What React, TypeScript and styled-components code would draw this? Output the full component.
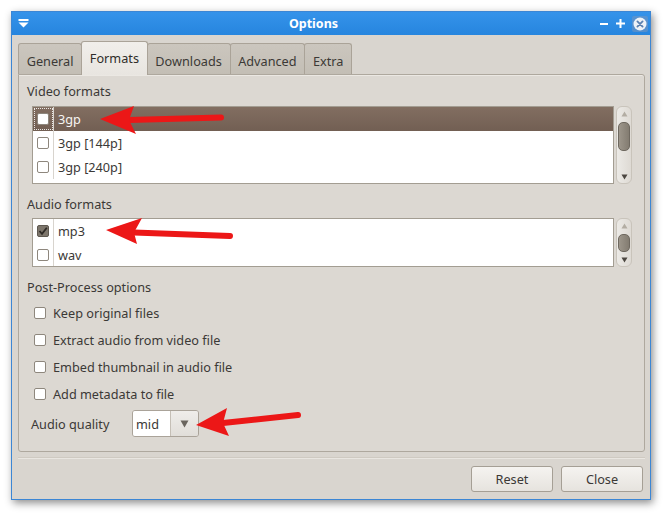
import React from "react";
import styled, { createGlobalStyle } from "styled-components";

const Global = createGlobalStyle`
  html, body { margin: 0; padding: 0; background: #ffffff; }
  body {
    font-family: "Noto Sans", "Open Sans", "DejaVu Sans", sans-serif;
    font-size: 12.7px;
    color: #3b3936;
  }
  #root { width: 668px; height: 516px; }
`;

const Stage = styled.div`
  position: relative;
  width: 668px;
  height: 516px;
  box-sizing: border-box;
  padding: 11px 0 0 11px;
  overflow: hidden;
`;

const Window = styled.div`
  width: 640px;
  height: 489px;
  box-sizing: border-box;
  border: 1px solid #3c86d4;
  background: #d9d5cf;
  box-shadow: 2px 3px 8px rgba(0, 0, 0, 0.45);
  display: flex;
  flex-direction: column;
`;

const TitleBar = styled.div`
  flex: none;
  height: 23px;
  display: flex;
  align-items: center;
  background: linear-gradient(#3593ea, #2685de);
  color: #ffffff;
`;

const TitleMenu = styled.div`
  width: 24px;
  flex: none;
  display: flex;
  align-items: center;
  padding-left: 6px;
  box-sizing: border-box;
`;

const TitleText = styled.div`
  flex: 1;
  text-align: center;
  font-weight: bold;
  font-size: 12.5px;
  line-height: 23px;
`;

const TitleControls = styled.div`
  width: 59px;
  flex: none;
  display: flex;
  align-items: center;
  gap: 8px;
  padding-left: 9px;
  box-sizing: border-box;
`;

const CloseBtn = styled.div`
  width: 16px;
  height: 16px;
  margin-left: -1px;
  display: flex;
  align-items: center;
  justify-content: center;
  background: rgba(120, 150, 190, 0.55);
  border-radius: 2px;
`;

const Body = styled.div`
  flex: 1;
  display: flex;
  flex-direction: column;
  padding: 6px 5px 0 6px;
`;

const TabBar = styled.div`
  display: flex;
  align-items: flex-end;
  height: 33px;
  position: relative;
  z-index: 2;
`;

const Tab = styled.div<{ $active?: boolean }>`
  box-sizing: border-box;
  height: ${(p) => (p.$active ? 34 : 31)}px;
  margin-bottom: ${(p) => (p.$active ? -1 : 0)}px;
  padding: ${(p) => (p.$active ? 7 : 8)}px 7.7px 0;
  margin-left: -1px;
  &:first-child { margin-left: 0; }
  border: 1px solid #aaa398;
  border-bottom: none;
  border-radius: 3px 3px 0 0;
  line-height: 18px;
  white-space: nowrap;
  position: relative;
  z-index: ${(p) => (p.$active ? 2 : 1)};
  background: ${(p) =>
    p.$active
      ? "linear-gradient(#f1efeb, #e8e5e0)"
      : "linear-gradient(#cbc6be, #c3beb5)"};
  color: ${(p) => (p.$active ? "#2f2d2a" : "#3b3936")};
`;

const Pane = styled.div`
  box-sizing: border-box;
  border: 1px solid #aea89e;
  border-radius: 0 3px 3px 3px;
  background: #dcd8d2;
  box-shadow: inset 0 1px 0 #ebe8e3;
  padding: 7px 12px 14px 8px;
  display: flex;
  flex-direction: column;
  position: relative;
  z-index: 1;
`;

const GroupLabel = styled.div<{ $gap?: number }>`
  line-height: 18px;
  margin-top: ${(p) => p.$gap ?? 0}px;
`;

const ListRow = styled.div<{ $gap: number }>`
  display: flex;
  gap: 2px;
  margin-top: ${(p) => p.$gap}px;
  margin-left: 5px;
`;

const ListBox = styled.div<{ $h: number }>`
  flex: 1;
  height: ${(p) => p.$h}px;
  box-sizing: border-box;
  border: 1px solid #a39d92;
  background: #ffffff;
  overflow: hidden;
`;

const Item = styled.div<{ $selected?: boolean }>`
  display: flex;
  height: 24px;
  align-items: stretch;
  background: ${(p) =>
    p.$selected ? "linear-gradient(#826e61, #725f53)" : "transparent"};
  color: ${(p) => (p.$selected ? "#f7f5f2" : "#3b3936")};
`;

const CheckCell = styled.div<{ $focus?: boolean }>`
  width: 20px;
  flex: none;
  border-right: 1px solid #d8d4ce;
  display: flex;
  align-items: center;
  justify-content: center;
  outline: ${(p) => (p.$focus ? "1px dotted rgba(255,255,255,0.85)" : "none")};
  outline-offset: -2px;
`;

const ItemText = styled.div`
  display: flex;
  align-items: center;
  padding-left: 4px;
`;

const Box = styled.span<{ $checked?: boolean }>`
  box-sizing: border-box;
  width: 12px;
  height: 12px;
  flex: none;
  border: 1px solid ${(p) => (p.$checked ? "#5f5951" : "#8e877d")};
  border-radius: 2px;
  background: ${(p) => (p.$checked ? "#7d766c" : "#ffffff")};
  display: inline-flex;
  align-items: center;
  justify-content: center;
`;

const Scroll = styled.div<{ $h: number }>`
  width: 16px;
  height: ${(p) => p.$h}px;
  box-sizing: border-box;
  border: 1px solid #c9c4bb;
  border-radius: 6px;
  background: linear-gradient(90deg, #eceae6, #dedad4);
  display: flex;
  flex-direction: column;
  align-items: center;
`;

const ArrowBox = styled.div`
  height: 13px;
  flex: none;
  display: flex;
  align-items: center;
  justify-content: center;
`;

const Thumb = styled.div<{ $h: number }>`
  width: 12px;
  height: ${(p) => p.$h}px;
  margin-top: 2px;
  box-sizing: border-box;
  border: 1px solid #6e685f;
  border-radius: 5px;
  background: linear-gradient(90deg, #9d968b, #837c71);
  flex: none;
`;

const Spacer = styled.div`
  flex: 1;
`;

const OptionList = styled.div`
  display: flex;
  flex-direction: column;
  margin-top: 3px;
`;

const Option = styled.label`
  height: 27px;
  display: flex;
  align-items: center;
  gap: 7px;
  padding-left: 7px;
`;

const QualityRow = styled.div`
  height: 27px;
  margin-top: 3px;
  display: flex;
  align-items: center;
  padding-left: 4px;
`;

const QualityLabel = styled.div`
  width: 101px;
  flex: none;
`;

const Combo = styled.div`
  width: 67px;
  height: 27px;
  box-sizing: border-box;
  border: 1px solid #aaa399;
  border-radius: 3px;
  display: flex;
  overflow: hidden;
`;

const ComboValue = styled.div`
  flex: 1;
  background: #ffffff;
  display: flex;
  align-items: center;
  padding-left: 3px;
`;

const ComboButton = styled.div`
  width: 27px;
  flex: none;
  border-left: 1px solid #c5bfb6;
  background: linear-gradient(#efedea, #e1ded9);
  display: flex;
  align-items: center;
  justify-content: center;
`;

const Footer = styled.div`
  margin-top: 5px;
  border-top: 1px solid #cfcac2;
  box-shadow: inset 0 1px 0 #e9e6e1;
  display: flex;
  justify-content: flex-end;
  gap: 8px;
  padding: 8px 2px 7px 0;
`;

const Button = styled.button`
  width: 82px;
  height: 26px;
  box-sizing: border-box;
  border: 1px solid #a59f95;
  border-radius: 3px;
  background: linear-gradient(#f5f3f0, #e6e3de);
  font-family: inherit;
  font-size: 12.7px;
  color: #3b3936;
  padding: 0;
`;

const Overlay = styled.svg`
  position: absolute;
  left: 0;
  top: 0;
  width: 668px;
  height: 516px;
  pointer-events: none;
  z-index: 10;
`;

const Check = () => (
  <svg width="10" height="10" viewBox="0 0 10 10">
    <path d="M1.5 5 L4 7.8 L8.8 1.8" fill="none" stroke="#2e2a26" strokeWidth="1.8" />
  </svg>
);

const Up = () => (
  <svg width="7" height="6" viewBox="0 0 7 6">
    <path d="M3.5 0.5 L6.5 5.5 L0.5 5.5 Z" fill="#b3ada3" />
  </svg>
);

const Down = () => (
  <svg width="7" height="6" viewBox="0 0 7 6">
    <path d="M0.5 0.5 L6.5 0.5 L3.5 5.5 Z" fill="#4c4741" />
  </svg>
);

const ScrollBar = ({ h, thumb }: { h: number; thumb: number }) => (
  <Scroll $h={h}>
    <ArrowBox>
      <Up />
    </ArrowBox>
    <Thumb $h={thumb} />
    <Spacer />
    <ArrowBox>
      <Down />
    </ArrowBox>
  </Scroll>
);

const video = ["3gp", "3gp [144p]", "3gp [240p]"];
const audio = [
  { name: "mp3", checked: true },
  { name: "wav", checked: false },
];
const options = [
  "Keep original files",
  "Extract audio from video file",
  "Embed thumbnail in audio file",
  "Add metadata to file",
];

const Arrow = ({ tip, up, low, notch, end }: { tip: number[]; up: number[]; low: number[]; notch: number[]; end: number[] }) => (
  <g fill="#ec1717" stroke="none">
    <line x1={notch[0]} y1={notch[1]} x2={end[0]} y2={end[1]} stroke="#ec1717" strokeWidth="6" strokeLinecap="round" />
    <polygon points={`${tip.join(",")} ${up.join(",")} ${notch.join(",")} ${low.join(",")}`} />
  </g>
);

export default function App() {
  return (
    <Stage>
      <Global />
      <Window>
        <TitleBar>
          <TitleMenu>
            <svg width="11" height="9" viewBox="0 0 11 9">
              <rect x="0.5" y="0" width="10" height="2" fill="#fff" />
              <path d="M0.5 3.5 L10.5 3.5 L5.5 8.5 Z" fill="#fff" />
            </svg>
          </TitleMenu>
          <TitleText>Options</TitleText>
          <TitleControls>
            <svg width="8" height="8" viewBox="0 0 8 8">
              <rect x="0" y="3" width="8" height="2" fill="#fff" />
            </svg>
            <svg width="9" height="9" viewBox="0 0 9 9">
              <rect x="0" y="3.5" width="9" height="2" fill="#fff" />
              <rect x="3.5" y="0" width="2" height="9" fill="#fff" />
            </svg>
            <CloseBtn>
              <svg width="14" height="14" viewBox="0 0 14 14">
                <circle cx="7" cy="7" r="6.5" fill="#eef2f7" />
                <path d="M4.4 4.4 L9.6 9.6 M9.6 4.4 L4.4 9.6" stroke="#5b80b0" strokeWidth="1.8" strokeLinecap="round" />
              </svg>
            </CloseBtn>
          </TitleControls>
        </TitleBar>
        <Body>
          <TabBar>
            <Tab>General</Tab>
            <Tab $active>Formats</Tab>
            <Tab>Downloads</Tab>
            <Tab>Advanced</Tab>
            <Tab>Extra</Tab>
          </TabBar>
          <Pane>
            <GroupLabel>Video formats</GroupLabel>
            <ListRow $gap={6}>
              <ListBox $h={78}>
                {video.map((v, i) => (
                  <Item key={v} $selected={i === 0}>
                    <CheckCell $focus={i === 0}>
                      <Box />
                    </CheckCell>
                    <ItemText>{v}</ItemText>
                  </Item>
                ))}
              </ListBox>
              <ScrollBar h={78} thumb={29} />
            </ListRow>
            <GroupLabel $gap={11}>Audio formats</GroupLabel>
            <ListRow $gap={5}>
              <ListBox $h={49}>
                {audio.map((a) => (
                  <Item key={a.name}>
                    <CheckCell>
                      <Box $checked={a.checked}>{a.checked && <Check />}</Box>
                    </CheckCell>
                    <ItemText>{a.name}</ItemText>
                  </Item>
                ))}
              </ListBox>
              <ScrollBar h={49} thumb={18} />
            </ListRow>
            <GroupLabel $gap={11}>Post-Process options</GroupLabel>
            <OptionList>
              {options.map((o) => (
                <Option key={o}>
                  <Box />
                  {o}
                </Option>
              ))}
            </OptionList>
            <QualityRow>
              <QualityLabel>Audio quality</QualityLabel>
              <Combo>
                <ComboValue>mid</ComboValue>
                <ComboButton>
                  <svg width="9" height="8" viewBox="0 0 9 8">
                    <path d="M0.5 0.5 L8.5 0.5 L4.5 7.5 Z" fill="#6a655e" />
                  </svg>
                </ComboButton>
              </Combo>
            </QualityRow>
          </Pane>
          <Footer>
            <Button>Reset</Button>
            <Button>Close</Button>
          </Footer>
        </Body>
      </Window>
      <Overlay viewBox="0 0 668 516">
        <Arrow tip={[100, 119]} up={[134, 106]} low={[136, 134]} notch={[129, 120]} end={[221, 117.5]} />
        <Arrow tip={[106, 230]} up={[142, 218]} low={[137, 244]} notch={[134, 232.5]} end={[230, 236]} />
        <Arrow tip={[196, 425]} up={[227, 408]} low={[229, 436]} notch={[223, 423]} end={[298, 415]} />
      </Overlay>
    </Stage>
  );
}
